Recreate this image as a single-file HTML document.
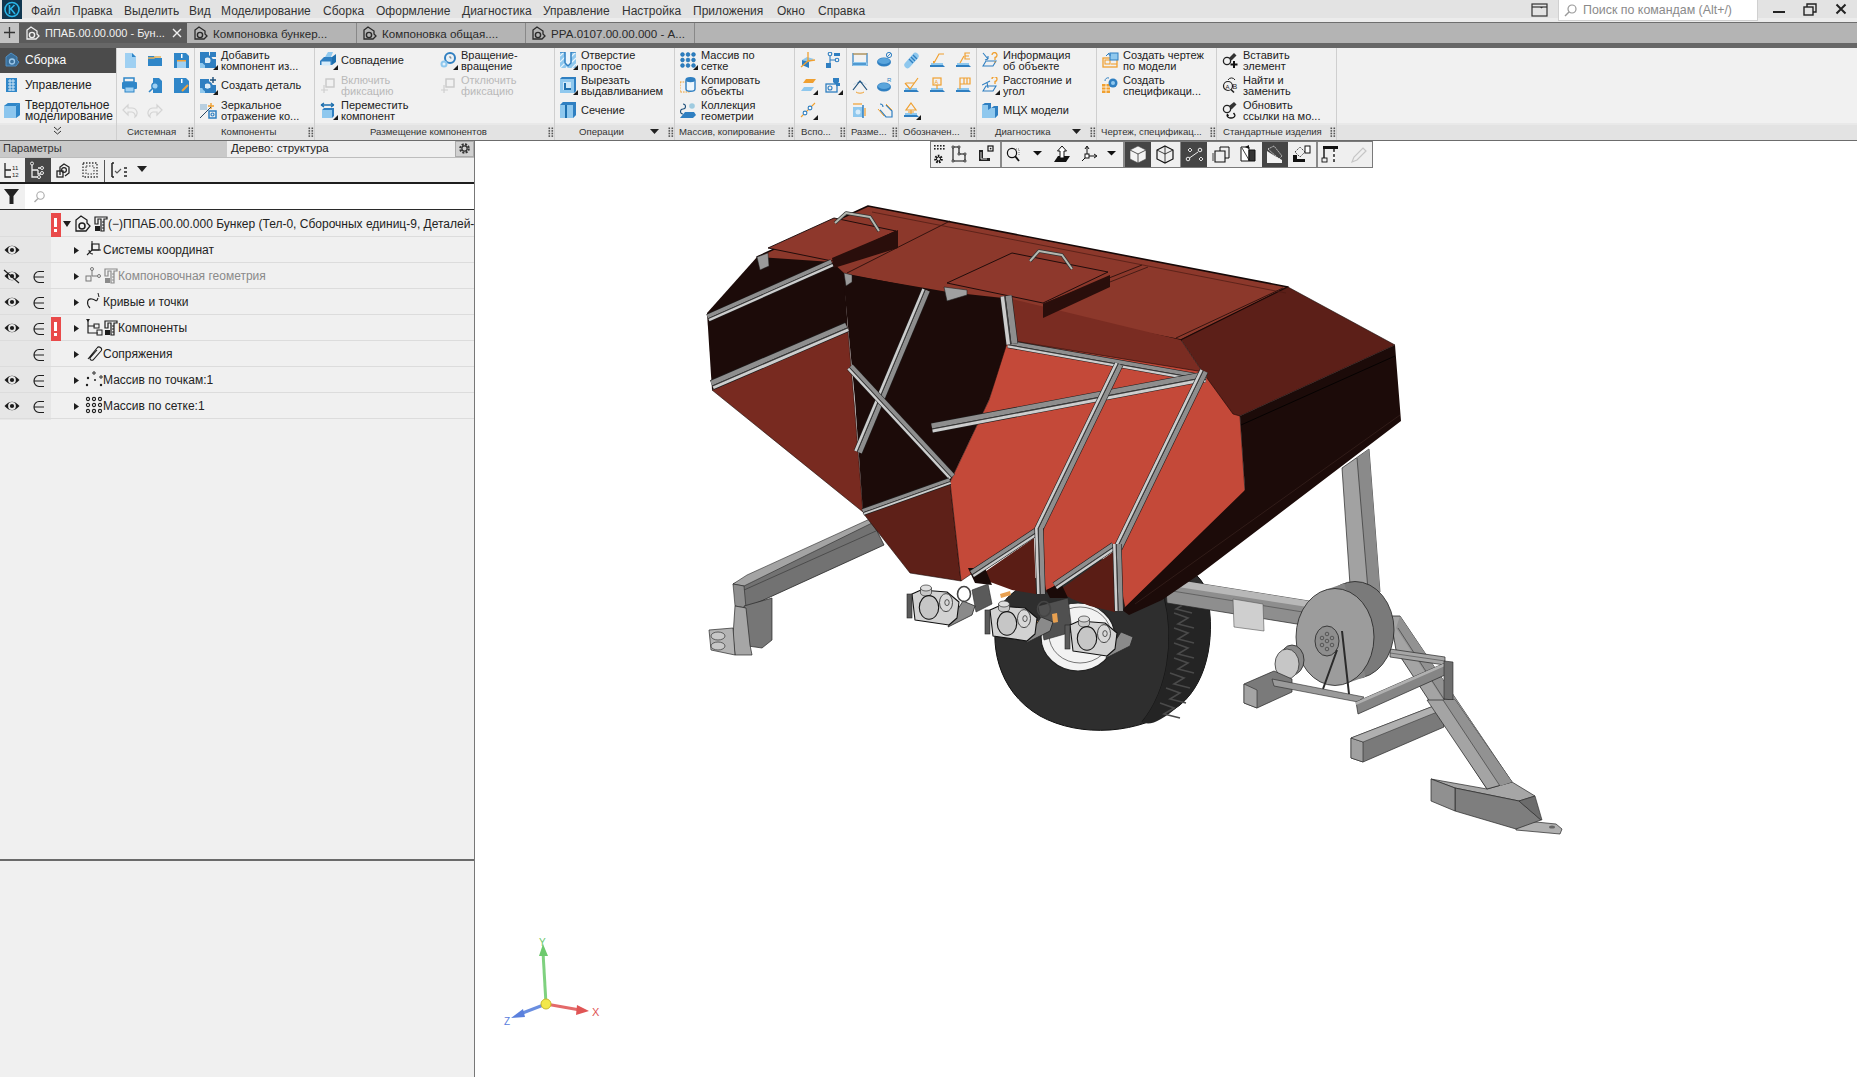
<!DOCTYPE html>
<html><head><meta charset="utf-8">
<style>
*{margin:0;padding:0;box-sizing:border-box}
html,body{width:1857px;height:1077px;overflow:hidden;background:#fff;font-family:"Liberation Sans",sans-serif;color:#222}
.a{position:absolute;white-space:nowrap}
.a svg{display:block}
svg.a{display:block}
#menu{left:0;top:0;width:1857px;height:22px;background:linear-gradient(#e3e3e3 0,#e3e3e3 18px,#ececec 18px,#ececec 22px)}
#menu span{position:absolute;top:4px;font-size:12px;color:#333}
.lbl{position:absolute;top:126px;font-size:9.6px;color:#333;white-space:nowrap}
.grip{position:absolute;top:126px;width:6px;height:11px;background-image:linear-gradient(#f0f0f0 0,#f0f0f0 0),radial-gradient(circle at 1.5px 1.5px,#555 1px,transparent 1.2px);background-size:0 0,3px 3px}
.tr{position:absolute;left:0;width:474px;height:26px;border-bottom:1px solid #dedede}
.tt{position:absolute;font-size:12px;color:#222;white-space:nowrap}
</style></head>

<body>
<svg class="a" style="left:0;top:0" width="1857" height="1077"><path d="M998 612 C990 640 995 690 1040 716 C1080 738 1140 735 1180 705 C1210 680 1216 630 1206 590 C1196 560 1150 555 1100 560 C1050 566 1005 590 998 612 Z" fill="#2e2e2e" stroke="#111" stroke-width="1"/>
<path d="M1164 596 C1175 640 1168 690 1142 722" fill="none" stroke="#161616" stroke-width="1.2"/>
<path d="M1206 590 C1216 630 1210 680 1180 705 C1160 722 1150 726 1142 722 C1168 690 1175 640 1164 596 Z" fill="#242424"/>
<path d="M1172 598 l14 5 l-10 6 l16 4" fill="none" stroke="#4a4a4a" stroke-width="1.6"/>
<path d="M1174 613 l14 5 l-10 6 l16 4" fill="none" stroke="#4a4a4a" stroke-width="1.6"/>
<path d="M1174 628 l14 5 l-10 6 l16 4" fill="none" stroke="#4a4a4a" stroke-width="1.6"/>
<path d="M1174 643 l14 5 l-10 6 l16 4" fill="none" stroke="#4a4a4a" stroke-width="1.6"/>
<path d="M1174 658 l14 5 l-10 6 l16 4" fill="none" stroke="#4a4a4a" stroke-width="1.6"/>
<path d="M1170 673 l14 5 l-10 6 l16 4" fill="none" stroke="#4a4a4a" stroke-width="1.6"/>
<path d="M1166 688 l14 5 l-10 6 l16 4" fill="none" stroke="#4a4a4a" stroke-width="1.6"/>
<path d="M1160 703 l14 5 l-10 6 l16 4" fill="none" stroke="#4a4a4a" stroke-width="1.6"/>
<ellipse cx="1078" cy="637" rx="37" ry="34" fill="#f2f2f2" stroke="#222" stroke-width="1.2"/>
<ellipse cx="1080" cy="635" rx="31" ry="28" fill="none" stroke="#555" stroke-width="0.8"/>
<polygon points="1342,468 1369,449 1380,592 1350,585" fill="#a2a2a2" stroke="#262626" stroke-width="0.7" stroke-linejoin="round"/>
<polygon points="1357,458 1369,449 1380,592 1368,590" fill="#8a8a8a" stroke="none" stroke-width="0.8" stroke-linejoin="round"/>
<line x1="1357" y1="458" x2="1368" y2="590" stroke="#333" stroke-width="0.7" stroke-linecap="butt"/>
<polygon points="1165,578 1340,606 1340,631 1167,603" fill="#8e8e8e" stroke="#262626" stroke-width="0.7" stroke-linejoin="round"/>
<polygon points="1165,578 1340,606 1340,612 1165,585" fill="#b8b8b8" stroke="none" stroke-width="0.8" stroke-linejoin="round"/>
<line x1="1166" y1="590" x2="1340" y2="618" stroke="#444" stroke-width="0.6" stroke-linecap="butt"/>
<polygon points="1233,599 1263,604 1264,631 1234,627" fill="#cfcfcf" stroke="#555" stroke-width="0.6" stroke-linejoin="round"/>
<polygon points="1390,616 1400,616 1512,782 1487,789 1396,650" fill="#a4a4a4" stroke="#262626" stroke-width="0.8" stroke-linejoin="round"/>
<polygon points="1400,616 1512,782 1500,786 1396,628" fill="#929292" stroke="none" stroke-width="0.8" stroke-linejoin="round"/>
<line x1="1398" y1="628" x2="1500" y2="786" stroke="#333" stroke-width="0.6" stroke-linecap="butt"/>
<polygon points="1390,649 1445,657 1445,665 1390,657" fill="#a6a6a6" stroke="#262626" stroke-width="0.7" stroke-linejoin="round"/>
<line x1="1390" y1="653" x2="1445" y2="661" stroke="#333" stroke-width="0.5" stroke-linecap="butt"/>
<polygon points="1516,820 1556,824 1562,829 1560,834 1516,830" fill="#b0b0b0" stroke="#262626" stroke-width="0.7" stroke-linejoin="round"/>
<ellipse cx="1552" cy="827" rx="3" ry="1.6" fill="#666"/>
<polygon points="1431,779 1487,789 1512,782 1535,796 1519,801 1455,788" fill="#a6a6a6" stroke="#262626" stroke-width="0.7" stroke-linejoin="round"/>
<polygon points="1455,788 1519,801 1541,820 1516,829 1455,811" fill="#7e7e7e" stroke="#262626" stroke-width="0.7" stroke-linejoin="round"/>
<polygon points="1431,779 1455,788 1455,811 1431,801" fill="#909090" stroke="#262626" stroke-width="0.7" stroke-linejoin="round"/>
<polygon points="1519,801 1535,796 1542,820 1541,820" fill="#6c6c6c" stroke="#262626" stroke-width="0.6" stroke-linejoin="round"/>
<polygon points="733,584 872,521 884,545 746,608" fill="#727272" stroke="#262626" stroke-width="0.8" stroke-linejoin="round"/>
<polygon points="733,584 747,575 872,518 872,523 744,586" fill="#a4a4a4" stroke="#262626" stroke-width="0.6" stroke-linejoin="round"/>
<line x1="744" y1="590" x2="876" y2="531" stroke="#333" stroke-width="0.6" stroke-linecap="butt"/>
<polygon points="733,584 744,586 746,608 735,606" fill="#8e8e8e" stroke="#262626" stroke-width="0.6" stroke-linejoin="round"/>
<polygon points="744,606 772,598 772,640 762,648 748,646" fill="#767676" stroke="#262626" stroke-width="0.7" stroke-linejoin="round"/>
<polygon points="735,606 746,608 750,645 752,655 735,655 733,636" fill="#a6a6a6" stroke="#262626" stroke-width="0.7" stroke-linejoin="round"/>
<polygon points="709,630 733,628 735,655 711,650" fill="#b4b4b4" stroke="#262626" stroke-width="0.7" stroke-linejoin="round"/>
<ellipse cx="718" cy="636" rx="7" ry="4" fill="#c8c8c8" stroke="#333" stroke-width="0.7"/>
<ellipse cx="718" cy="646" rx="7" ry="4" fill="#c8c8c8" stroke="#333" stroke-width="0.7"/>
<polygon points="757,257 868,206 1288,287 1181,340" fill="#8c382b" stroke="#160807" stroke-width="1.6" stroke-linejoin="round"/>
<polygon points="707,313 757,257 832,262 844,273 848,331 712,390" fill="#1c0b09" stroke="none" stroke-width="0.8" stroke-linejoin="round"/>
<polygon points="712,390 848,331 854,400 863,512" fill="#782a20" stroke="#1a0a08" stroke-width="0.6" stroke-linejoin="round"/>
<polygon points="843,274 948,292 1003,298 1009,343 989,400 950,482 863,513 855,400" fill="#1c0b09" stroke="none" stroke-width="0.8" stroke-linejoin="round"/>
<polygon points="863,513 950,482 961,581 910,573" fill="#5e2018" stroke="#1a0a08" stroke-width="0.6" stroke-linejoin="round"/>
<polygon points="1008,298 1181,340 1204,374 1008,342" fill="#7a2c22" stroke="none" stroke-width="0.8" stroke-linejoin="round"/>
<polygon points="1008,340 1204,372 1240,416 1245,492 1125,608 1112,546 1046,592 1034,531 961,581 950,482 989,400" fill="#c44939" stroke="#1a0a08" stroke-width="0.6" stroke-linejoin="round"/>
<polygon points="1288,287 1395,345 1240,416 1233,414 1204,374 1181,340" fill="#5c1f18" stroke="#160807" stroke-width="0.6" stroke-linejoin="round"/>
<polygon points="1240,416 1395,345 1401,421 1200,574 1162,600 1129,615 1122,610 1245,490" fill="#1c0b09" stroke="none" stroke-width="0.8" stroke-linejoin="round"/>
<line x1="1241" y1="425" x2="1395" y2="356" stroke="#000" stroke-width="0.8" stroke-linecap="butt"/>
<line x1="1135" y1="604" x2="1400" y2="415" stroke="#3a2420" stroke-width="0.7" stroke-linecap="butt"/>
<polygon points="976,578 1034,538 1036,594 1012,590 993,583" fill="#5a1d15" stroke="none" stroke-width="0.8" stroke-linejoin="round"/>
<polygon points="1058,591 1113,552 1115,612 1090,606 1072,599" fill="#5a1d15" stroke="none" stroke-width="0.8" stroke-linejoin="round"/>
<polygon points="968,568 985,568 992,585 975,583" fill="#1a0a08" stroke="none" stroke-width="0.8" stroke-linejoin="round"/>
<polygon points="1046,590 1061,583 1068,598 1050,598" fill="#1a0a08" stroke="none" stroke-width="0.8" stroke-linejoin="round"/>
<polygon points="768,248 834,218 896,231 832,261" fill="#8e382c" stroke="#150808" stroke-width="0.9" stroke-linejoin="round"/>
<polygon points="832,258 898,230 898,248 834,268" fill="#2a0e0b" stroke="none" stroke-width="0.8" stroke-linejoin="round"/>
<path d="M835 223 L846 213 L870 217 L879 231" fill="none" stroke="#333" stroke-width="3.4" stroke-linejoin="round"/><path d="M835 223 L846 213 L870 217 L879 231" fill="none" stroke="#b4b8b0" stroke-width="2" stroke-linejoin="round"/>
<polygon points="757,257 768,253 769,266 760,270" fill="#9a9a9a" stroke="#222" stroke-width="0.5" stroke-linejoin="round"/>
<polygon points="844,273 852,275 852,282 846,286" fill="#9a9a9a" stroke="#222" stroke-width="0.5" stroke-linejoin="round"/>
<polygon points="947,283 1012,253 1108,272 1043,303" fill="#8e382c" stroke="#150808" stroke-width="0.9" stroke-linejoin="round"/>
<polygon points="1043,304 1110,275 1110,287 1043,318" fill="#2a0e0b" stroke="none" stroke-width="0.8" stroke-linejoin="round"/>
<path d="M1030 261 L1039 251 L1062 255 L1072 269" fill="none" stroke="#333" stroke-width="3.4" stroke-linejoin="round"/><path d="M1030 261 L1039 251 L1062 255 L1072 269" fill="none" stroke="#b4b8b0" stroke-width="2" stroke-linejoin="round"/>
<polygon points="944,287 967,290 967,295 947,301" fill="#a0a0a0" stroke="#222" stroke-width="0.6" stroke-linejoin="round"/>
<line x1="950" y1="221" x2="847" y2="273" stroke="#2a100c" stroke-width="0.9" stroke-linecap="butt"/>
<line x1="1142" y1="265" x2="1043" y2="304" stroke="#2a100c" stroke-width="0.9" stroke-linecap="butt"/>
<line x1="1148" y1="267" x2="1049" y2="306" stroke="#2a100c" stroke-width="0.7" stroke-linecap="butt"/>
<line x1="1283" y1="288" x2="1176" y2="338" stroke="#2a100c" stroke-width="0.9" stroke-linecap="butt"/>
<line x1="872" y1="212" x2="1286" y2="293" stroke="#4a1a12" stroke-width="0.7" stroke-linecap="butt"/>
<polygon points="706.3,314.3 830.3,259.3 833.7,266.7 709.7,321.7" fill="#1e1e1e"/>
<polygon points="706.6,314.8 830.6,259.8 832.1,263.3 708.1,318.3" fill="#8e8e8e"/>
<polygon points="708.1,318.3 832.1,263.3 832.5,264.1 708.5,319.1" fill="#3a3a3a"/>
<polygon points="708.5,319.1 832.5,264.1 833.4,266.2 709.4,321.2" fill="#cdcdcd"/>
<polygon points="710.0,380.3 845.0,322.3 849.0,331.7 714.0,389.7" fill="#1e1e1e"/>
<polygon points="710.2,380.9 845.2,322.9 847.2,327.4 712.2,385.4" fill="#8e8e8e"/>
<polygon points="712.2,385.4 847.2,327.4 847.6,328.4 712.6,386.4" fill="#3a3a3a"/>
<polygon points="712.6,386.4 847.6,328.4 848.8,331.1 713.8,389.1" fill="#cdcdcd"/>
<polygon points="1008.7,340.0 1206.7,375.0 1205.3,383.0 1007.3,348.0" fill="#1e1e1e"/>
<polygon points="1008.6,340.6 1206.6,375.6 1205.9,379.3 1007.9,344.3" fill="#8e8e8e"/>
<polygon points="1007.9,344.3 1205.9,379.3 1205.8,380.2 1007.8,345.2" fill="#3a3a3a"/>
<polygon points="1007.8,345.2 1205.8,380.2 1205.4,382.4 1007.4,347.4" fill="#cdcdcd"/>
<polygon points="1012.1,295.2 1018.1,343.2 1005.9,344.8 999.9,296.8" fill="#1e1e1e"/>
<polygon points="1011.5,295.3 1017.5,343.3 1011.5,344.1 1005.5,296.1" fill="#8e8e8e"/>
<polygon points="1005.5,296.1 1011.5,344.1 1010.1,344.2 1004.1,296.2" fill="#3a3a3a"/>
<polygon points="1004.1,296.2 1010.1,344.2 1006.5,344.7 1000.5,296.7" fill="#cdcdcd"/>
<polygon points="930.2,291.8 862.2,453.8 853.8,450.2 921.8,288.2" fill="#1e1e1e"/>
<polygon points="929.7,291.5 861.7,453.5 857.6,451.8 925.6,289.8" fill="#8e8e8e"/>
<polygon points="925.6,289.8 857.6,451.8 856.7,451.5 924.7,289.5" fill="#3a3a3a"/>
<polygon points="924.7,289.5 856.7,451.5 854.3,450.5 922.3,288.5" fill="#cdcdcd"/>
<polygon points="853.0,364.2 955.0,474.2 949.0,479.8 847.0,369.8" fill="#1e1e1e"/>
<polygon points="852.6,364.6 954.6,474.6 951.7,477.2 849.7,367.2" fill="#8e8e8e"/>
<polygon points="849.7,367.2 951.7,477.2 951.1,477.8 849.1,367.8" fill="#3a3a3a"/>
<polygon points="849.1,367.8 951.1,477.8 949.4,479.4 847.4,369.4" fill="#cdcdcd"/>
<polygon points="861.8,508.6 948.8,477.6 951.2,484.4 864.2,515.4" fill="#1e1e1e"/>
<polygon points="862.0,509.2 949.0,478.2 950.1,481.3 863.1,512.3" fill="#8e8e8e"/>
<polygon points="863.1,512.3 950.1,481.3 950.4,482.0 863.4,513.0" fill="#3a3a3a"/>
<polygon points="863.4,513.0 950.4,482.0 951.0,483.8 864.0,514.8" fill="#cdcdcd"/>
<polygon points="931.1,423.0 1201.1,372.0 1202.9,382.0 932.9,433.0" fill="#1e1e1e"/>
<polygon points="931.2,423.6 1201.2,372.6 1202.1,377.4 932.1,428.4" fill="#8e8e8e"/>
<polygon points="932.1,428.4 1202.1,377.4 1202.3,378.5 932.3,429.5" fill="#3a3a3a"/>
<polygon points="932.3,429.5 1202.3,378.5 1202.8,381.4 932.8,432.4" fill="#cdcdcd"/>
<polygon points="1123.1,366.0 1040.1,537.0 1031.9,533.0 1114.9,362.0" fill="#1e1e1e"/>
<polygon points="1122.6,365.7 1039.6,536.7 1035.6,534.8 1118.6,363.8" fill="#8e8e8e"/>
<polygon points="1118.6,363.8 1035.6,534.8 1034.7,534.4 1117.7,363.4" fill="#3a3a3a"/>
<polygon points="1117.7,363.4 1034.7,534.4 1032.4,533.3 1115.4,362.3" fill="#cdcdcd"/>
<polygon points="1208.1,373.0 1122.1,550.0 1113.9,546.0 1199.9,369.0" fill="#1e1e1e"/>
<polygon points="1207.6,372.7 1121.6,549.7 1117.6,547.8 1203.6,370.8" fill="#8e8e8e"/>
<polygon points="1203.6,370.8 1117.6,547.8 1116.7,547.4 1202.7,370.4" fill="#3a3a3a"/>
<polygon points="1202.7,370.4 1116.7,547.4 1114.4,546.3 1200.4,369.3" fill="#cdcdcd"/>
<polygon points="969.8,570.6 1033.8,528.6 1038.2,535.4 974.2,577.4" fill="#1e1e1e"/>
<polygon points="970.1,571.1 1034.1,529.1 1036.2,532.3 972.2,574.3" fill="#8e8e8e"/>
<polygon points="972.2,574.3 1036.2,532.3 1036.7,533.0 972.7,575.0" fill="#3a3a3a"/>
<polygon points="972.7,575.0 1036.7,533.0 1037.9,534.9 973.9,576.9" fill="#cdcdcd"/>
<polygon points="1052.7,582.6 1111.7,542.6 1116.3,549.4 1057.3,589.4" fill="#1e1e1e"/>
<polygon points="1053.0,583.1 1112.0,543.1 1114.2,546.3 1055.2,586.3" fill="#8e8e8e"/>
<polygon points="1055.2,586.3 1114.2,546.3 1114.7,547.0 1055.7,587.0" fill="#3a3a3a"/>
<polygon points="1055.7,587.0 1114.7,547.0 1116.0,548.9 1057.0,588.9" fill="#cdcdcd"/>
<polygon points="1043.6,527.9 1045.6,593.9 1036.4,594.1 1034.4,528.1" fill="#1e1e1e"/>
<polygon points="1043.0,527.9 1045.0,593.9 1040.6,594.0 1038.6,528.0" fill="#8e8e8e"/>
<polygon points="1038.6,528.0 1040.6,594.0 1039.6,594.0 1037.6,528.0" fill="#3a3a3a"/>
<polygon points="1037.6,528.0 1039.6,594.0 1037.0,594.1 1035.0,528.1" fill="#cdcdcd"/>
<polygon points="1121.6,543.9 1123.6,610.9 1114.4,611.1 1112.4,544.1" fill="#1e1e1e"/>
<polygon points="1121.0,543.9 1123.0,610.9 1118.6,611.0 1116.6,544.0" fill="#8e8e8e"/>
<polygon points="1116.6,544.0 1118.6,611.0 1117.6,611.0 1115.6,544.0" fill="#3a3a3a"/>
<polygon points="1115.6,544.0 1117.6,611.0 1115.0,611.1 1113.0,544.1" fill="#cdcdcd"/>
<polygon points="972,590 988,584 992,604 976,612" fill="#5a5a5a" stroke="#262626" stroke-width="0.6" stroke-linejoin="round"/>
<polygon points="1038,606 1068,598 1072,632 1044,640" fill="#505050" stroke="#262626" stroke-width="0.6" stroke-linejoin="round"/>
<polygon points="1052,614 1057,613 1058,622 1053,623" fill="#e8a050" stroke="none" stroke-width="0.8" stroke-linejoin="round"/>
<polygon points="1033,622 1038,621 1039,630 1034,631" fill="#e8a050" stroke="none" stroke-width="0.8" stroke-linejoin="round"/>
<polygon points="1000,594 1010,591 1011,595 1001,598" fill="#e8a050" stroke="none" stroke-width="0.8" stroke-linejoin="round"/>
<polygon points="951,620 963,601 975,606 972,615 948,627" fill="#8a8a8a" stroke="#262626" stroke-width="0.8" stroke-linejoin="round"/>
<polygon points="912,594 921,590 947,592 959,602 957,618 949,625 915,620" fill="#d2d2d2" stroke="#111" stroke-width="1.1" stroke-linejoin="round"/>
<rect x="907" y="594" width="5" height="24" fill="#5a5a5a" stroke="#222" stroke-width="0.6"/>
<path d="M920.5 588v5a5.5 3 0 0 0 11 0v-5z" fill="#c8c8c8" stroke="#333" stroke-width="0.7"/><ellipse cx="926" cy="588" rx="5.5" ry="3" fill="#dedede" stroke="#333" stroke-width="0.7"/>
<ellipse cx="929" cy="607.4" rx="9.7" ry="11.8" fill="#c6c6c6" stroke="#111" stroke-width="1.1"/>
<ellipse cx="946" cy="602.6" rx="6.5" ry="9" fill="#d8d8d8" stroke="#222" stroke-width="0.8"/><ellipse cx="947" cy="602.6" rx="2.2" ry="3" fill="none" stroke="#333" stroke-width="0.8"/>
<polygon points="1029,636 1041,617 1053,622 1050,631 1026,643" fill="#8a8a8a" stroke="#262626" stroke-width="0.8" stroke-linejoin="round"/>
<polygon points="990,610 999,606 1025,608 1037,618 1035,634 1027,641 993,636" fill="#d2d2d2" stroke="#111" stroke-width="1.1" stroke-linejoin="round"/>
<rect x="985" y="610" width="5" height="24" fill="#5a5a5a" stroke="#222" stroke-width="0.6"/>
<path d="M998.5 604v5a5.5 3 0 0 0 11 0v-5z" fill="#c8c8c8" stroke="#333" stroke-width="0.7"/><ellipse cx="1004" cy="604" rx="5.5" ry="3" fill="#dedede" stroke="#333" stroke-width="0.7"/>
<ellipse cx="1007" cy="623.4" rx="9.7" ry="11.8" fill="#c6c6c6" stroke="#111" stroke-width="1.1"/>
<ellipse cx="1024" cy="618.6" rx="6.5" ry="9" fill="#d8d8d8" stroke="#222" stroke-width="0.8"/><ellipse cx="1025" cy="618.6" rx="2.2" ry="3" fill="none" stroke="#333" stroke-width="0.8"/>
<polygon points="1109,651 1121,632 1133,637 1130,646 1106,658" fill="#8a8a8a" stroke="#262626" stroke-width="0.8" stroke-linejoin="round"/>
<polygon points="1070,625 1079,621 1105,623 1117,633 1115,649 1107,656 1073,651" fill="#d2d2d2" stroke="#111" stroke-width="1.1" stroke-linejoin="round"/>
<rect x="1065" y="625" width="5" height="24" fill="#5a5a5a" stroke="#222" stroke-width="0.6"/>
<path d="M1078.5 619v5a5.5 3 0 0 0 11 0v-5z" fill="#c8c8c8" stroke="#333" stroke-width="0.7"/><ellipse cx="1084" cy="619" rx="5.5" ry="3" fill="#dedede" stroke="#333" stroke-width="0.7"/>
<ellipse cx="1087" cy="638.4" rx="9.7" ry="11.8" fill="#c6c6c6" stroke="#111" stroke-width="1.1"/>
<ellipse cx="1104" cy="633.6" rx="6.5" ry="9" fill="#d8d8d8" stroke="#222" stroke-width="0.8"/><ellipse cx="1105" cy="633.6" rx="2.2" ry="3" fill="none" stroke="#333" stroke-width="0.8"/>
<ellipse cx="964" cy="594" rx="6.5" ry="7.5" fill="none" stroke="#444" stroke-width="1.6"/>
<ellipse cx="1044" cy="609" rx="6.5" ry="7.5" fill="none" stroke="#444" stroke-width="1.6"/>
<ellipse cx="1355" cy="630" rx="39" ry="48.5" fill="#7a7a7a" stroke="#222" stroke-width="0.8"/>
<polygon points="1345.5,683.7 1324.5,590.3 1344.5,583.3 1365.5,676.7" fill="#858585" stroke="none" stroke-width="0.8" stroke-linejoin="round"/>
<ellipse cx="1335" cy="637" rx="39" ry="48.5" fill="#9c9c9c" stroke="#222" stroke-width="0.8"/>
<ellipse cx="1327" cy="641" rx="12" ry="15" fill="#8e8e8e" stroke="#222" stroke-width="0.8"/>
<circle cx="1327" cy="634" r="1.8" fill="none" stroke="#333" stroke-width="0.6"/>
<circle cx="1332" cy="638" r="1.8" fill="none" stroke="#333" stroke-width="0.6"/>
<circle cx="1332" cy="645" r="1.8" fill="none" stroke="#333" stroke-width="0.6"/>
<circle cx="1327" cy="649" r="1.8" fill="none" stroke="#333" stroke-width="0.6"/>
<circle cx="1322" cy="645" r="1.8" fill="none" stroke="#333" stroke-width="0.6"/>
<circle cx="1322" cy="638" r="1.8" fill="none" stroke="#333" stroke-width="0.6"/>
<circle cx="1327" cy="641" r="1.8" fill="none" stroke="#333" stroke-width="0.6"/>
<path d="M1342 631 L1349 694 M1337 650 L1323 689" stroke="#2a2a2a" stroke-width="2"/>
<ellipse cx="1292" cy="660" rx="12" ry="15" fill="#8a8a8a" stroke="#222" stroke-width="0.8"/>
<ellipse cx="1287" cy="664" rx="12" ry="15" fill="#c6c6c6" stroke="#333" stroke-width="0.8"/>
<polygon points="1244,684 1274,671 1292,679 1292,692 1257,708 1244,703" fill="#7a7a7a" stroke="#262626" stroke-width="0.7" stroke-linejoin="round"/>
<polygon points="1244,684 1257,690 1257,708 1244,703" fill="#a4a4a4" stroke="#262626" stroke-width="0.6" stroke-linejoin="round"/>
<polygon points="1272,679 1364,697 1358,702 1274,686" fill="#9a9a9a" stroke="#262626" stroke-width="0.6" stroke-linejoin="round"/>
<polygon points="1356,702 1445,663 1445,675 1358,714" fill="#858585" stroke="#262626" stroke-width="0.7" stroke-linejoin="round"/>
<polygon points="1356,702 1445,663 1445,666 1356,705" fill="#b0b0b0" stroke="none" stroke-width="0.8" stroke-linejoin="round"/>
<polygon points="1444,661 1453,662 1453,700 1444,699" fill="#6e6e6e" stroke="#262626" stroke-width="0.6" stroke-linejoin="round"/>
<polygon points="1351,738 1444,702 1444,727 1363,762 1351,758" fill="#7a7a7a" stroke="#262626" stroke-width="0.7" stroke-linejoin="round"/>
<polygon points="1351,738 1363,742 1363,762 1351,758" fill="#a0a0a0" stroke="#262626" stroke-width="0.6" stroke-linejoin="round"/>
<polygon points="1351,738 1444,702 1452,706 1363,742" fill="#b0b0b0" stroke="#262626" stroke-width="0.5" stroke-linejoin="round"/>
<polygon points="1427,700 1455,700 1512,782 1487,789" fill="#a4a4a4" stroke="#262626" stroke-width="0.7" stroke-linejoin="round"/>
<polygon points="1443,700 1455,700 1512,782 1500,786" fill="#929292" stroke="none" stroke-width="0.8" stroke-linejoin="round"/>
<line x1="1443" y1="700" x2="1500" y2="786" stroke="#333" stroke-width="0.6" stroke-linecap="butt"/></svg>
<svg class="a" style="left:495px;top:930px" width="115" height="100">
<line x1="51" y1="74" x2="48" y2="22" stroke="#7fd17f" stroke-width="3"/><path d="M44 26l4-12 5 12z" fill="#6cc96c"/>
<text x="44" y="16" font-size="10" fill="#6cc96c" font-family="Liberation Sans">Y</text>
<line x1="51" y1="74" x2="85" y2="80" stroke="#e46a6a" stroke-width="3"/><path d="M82 75l12 6-13 4z" fill="#e05555"/>
<text x="97" y="86" font-size="11" fill="#e05555" font-family="Liberation Sans">X</text>
<line x1="51" y1="74" x2="25" y2="84" stroke="#6a8ee0" stroke-width="3"/><path d="M28 79l-12 9 14 -1z" fill="#5a80dd"/>
<text x="9" y="95" font-size="10" fill="#5a80dd" font-family="Liberation Sans">Z</text>
<circle cx="51" cy="74" r="5" fill="#f2e84a" stroke="#c9b92a" stroke-width="1"/>
</svg>
<div class="a" style="left:930px;top:141px;width:443px;height:27px;background:#efefef;border:1px solid #7a7a7a"></div>
<div class="a" style="left:1000px;top:142px;width:1.5px;height:25px;background:#8a8a8a"></div>
<div class="a" style="left:1123px;top:142px;width:1.5px;height:25px;background:#8a8a8a"></div>
<div class="a" style="left:1180px;top:142px;width:1.5px;height:25px;background:#8a8a8a"></div>
<div class="a" style="left:1316px;top:142px;width:1.5px;height:25px;background:#8a8a8a"></div>
<div class="a" style="left:1125px;top:142px;width:26px;height:25px;background:#454545"></div>
<div class="a" style="left:1181px;top:142px;width:26px;height:25px;background:#454545"></div>
<div class="a" style="left:1262px;top:142px;width:26px;height:25px;background:#454545"></div>
<svg class="a" style="left:0;top:0" width="1857" height="200"><rect x="934" y="145" width="1.6" height="1.6" fill="#222"/><rect x="934" y="148" width="1.6" height="1.6" fill="#222"/><rect x="937" y="145" width="1.6" height="1.6" fill="#222"/><rect x="937" y="148" width="1.6" height="1.6" fill="#222"/><rect x="940" y="145" width="1.6" height="1.6" fill="#222"/><rect x="940" y="148" width="1.6" height="1.6" fill="#222"/><rect x="943" y="145" width="1.6" height="1.6" fill="#222"/><rect x="943" y="148" width="1.6" height="1.6" fill="#222"/><circle cx="938.5" cy="159" r="3.2" fill="none" stroke="#111" stroke-width="2.2" stroke-dasharray="1.6 1.2"/><circle cx="938.5" cy="159" r="2" fill="none" stroke="#111" stroke-width="1"/><path d="M953 147h6v7h6v7h-12z" fill="none" stroke="#111" stroke-width="1.1"/><circle cx="953" cy="147" r="1.1" fill="#fff" stroke="#111" stroke-width="0.8"/><circle cx="959" cy="147" r="1.1" fill="#fff" stroke="#111" stroke-width="0.8"/><circle cx="959" cy="154" r="1.1" fill="#fff" stroke="#111" stroke-width="0.8"/><circle cx="965" cy="154" r="1.1" fill="#fff" stroke="#111" stroke-width="0.8"/><circle cx="965" cy="161" r="1.1" fill="#fff" stroke="#111" stroke-width="0.8"/><circle cx="953" cy="161" r="1.1" fill="#fff" stroke="#111" stroke-width="0.8"/><path d="M979 150h4v8h7v3h-11z" fill="#222"/><path d="M981 152v7h6" fill="none" stroke="#fff" stroke-width="0.8"/><rect x="988" y="146" width="5" height="5" fill="#fff" stroke="#111" stroke-width="1.2"/><rect x="989.8" y="147.8" width="1.6" height="1.6" fill="#111"/><circle cx="1012" cy="153" r="4.6" fill="none" stroke="#111" stroke-width="1.2"/><path d="M1015 156l4 5" stroke="#111" stroke-width="1.8"/><path d="M1014 149h5v7" fill="none" stroke="#555" stroke-width="0.8" stroke-dasharray="1 1"/><path d="M1033 151h9l-4.5 4.5z" fill="#111"/><path d="M1054 162l4-6h12l-4 6z" fill="#111"/><path d="M1060 158v-7h-2.5l4.5-5 4.5 5h-2.5v7z" fill="#fff" stroke="#111" stroke-width="1"/><path d="M1087 156v-9M1085 149l2-3 2 3M1087 156h9M1094 154l3 2-3 2M1087 156l-5 5" fill="none" stroke="#111" stroke-width="1"/><rect x="1085" y="154" width="4" height="4" fill="#fff" stroke="#111" stroke-width="1"/><path d="M1107 151h9l-4.5 4.5z" fill="#111"/><path d="M1138 146l8 4v9l-8 4-8-4v-9z" fill="#f4f4f4" stroke="#444" stroke-width="0.6"/><path d="M1130 150l8 4 8-4M1138 154v9" fill="none" stroke="#444" stroke-width="0.9"/><path d="M1165 146l8 4v9l-8 4-8-4v-9z" fill="none" stroke="#111" stroke-width="1.2"/><path d="M1157 150l8 4 8-4M1165 154v9M1165 146v8" fill="none" stroke="#111" stroke-width="0.8"/><path d="M1188 159l10-7" stroke="#eee" stroke-width="1"/><circle cx="1188" cy="159" r="1.8" fill="#454545" stroke="#eee" stroke-width="1"/><circle cx="1200" cy="150" r="1.8" fill="#454545" stroke="#eee" stroke-width="1"/><path d="M1188 150l2-2 2 2-2 2z M1199 159l2-2 2 2-2 2z" fill="none" stroke="#eee" stroke-width="0.9"/><path d="M1215 151h10v11h-10z" fill="none" stroke="#111" stroke-width="1.1"/><path d="M1220 151v-4h9v11h-4" fill="none" stroke="#111" stroke-width="1"/><path d="M1213 153v8" stroke="#111" stroke-width="0.8"/><path d="M1241 147h8v14h-8z" fill="#fff" stroke="#111" stroke-width="1"/><path d="M1249 150h6v11h-6z" fill="#333" stroke="#111" stroke-width="1"/><path d="M1242 148l7 12" stroke="#111" stroke-width="0.8"/><path d="M1245 147l4-2v4z" fill="#111"/><path d="M1267 151l8 5 7 4v3h-15z" fill="#f2f2f2"/><path d="M1268 149l6-3 8 10-3 3z" fill="none" stroke="#ddd" stroke-width="1" stroke-dasharray="1.5 1"/><path d="M1293 155h4v4h8v3h-12z" fill="#111"/><path d="M1295 152l5-5 5 5-5 5z" fill="none" stroke="#333" stroke-width="0.9" stroke-dasharray="1.5 1"/><rect x="1305" y="146" width="5" height="7" fill="#fff" stroke="#111" stroke-width="1"/><path d="M1323 146h15v3h-15z" fill="#111"/><path d="M1324 149v9M1334 149v13" stroke="#111" stroke-width="1.4"/><rect x="1322" y="158" width="5" height="4" fill="none" stroke="#111" stroke-width="0.9"/><circle cx="1334" cy="153" r="1.2" fill="#fff"/><circle cx="1334" cy="158" r="1.2" fill="#fff"/><path d="M1352 162l2-5 9-9 3 3-9 9z" fill="none" stroke="#c6c6c6" stroke-width="1.2"/></svg>
<div class="a" id="menu">
 <svg class="a" style="left:2px;top:0" width="20" height="19"><rect width="20" height="19" fill="#10364f"/><circle cx="10" cy="9.5" r="7" fill="none" stroke="#2ab5e8" stroke-width="1.6"/><path d="M7.5 5v9M7.5 10l5-5M9 9l4 5" stroke="#2ab5e8" stroke-width="1.6" fill="none"/></svg>
 <span style="left:31px">Файл</span><span style="left:72px">Правка</span><span style="left:124px">Выделить</span><span style="left:189px">Вид</span><span style="left:221px">Моделирование</span><span style="left:323px">Сборка</span><span style="left:376px">Оформление</span><span style="left:462px">Диагностика</span><span style="left:543px">Управление</span><span style="left:622px">Настройка</span><span style="left:693px">Приложения</span><span style="left:777px">Окно</span><span style="left:818px">Справка</span>
</div>
<div class="a" style="left:0;top:141px;width:474px;height:936px;background:#f0f0f0"></div>
<div class="a" style="left:474px;top:141px;width:1px;height:936px;background:#777"></div>
<div class="a" style="left:0;top:141px;width:227px;height:16px;background:#c9c9c9"></div>
<div class="a" style="left:3px;top:142px;font-size:11px;color:#333">Параметры</div>
<div class="a" style="left:227px;top:141px;width:247px;height:16px;background:#efefef"></div>
<div class="a" style="left:231px;top:142px;font-size:11.5px;color:#222">Дерево: структура</div>
<div class="a" style="left:455px;top:141px;width:19px;height:16px;background:#d0d0d0;border:1px solid #aaa"></div>
<svg class="a" style="left:457px;top:141px" width="15" height="15"><circle cx="7.5" cy="7.5" r="4.2" fill="none" stroke="#333" stroke-width="2.2" stroke-dasharray="2 1.3"/><circle cx="7.5" cy="7.5" r="2.6" fill="none" stroke="#333" stroke-width="1.2"/></svg>
<div class="a" style="left:0;top:157px;width:474px;height:1px;background:#bdbdbd"></div>
<div class="a" style="left:25px;top:158px;width:26px;height:25px;background:#474747"></div>
<div class="a" style="left:104px;top:160px;width:1px;height:22px;background:#555"></div>
<div class="a" style="left:0;top:182px;width:474px;height:2px;background:#1e1e1e"></div>
<svg class="a" style="left:3px;top:161px" width="18" height="18"><path d="M2 2v14h6M2 9h6" fill="none" stroke="#222" stroke-width="1.3"/><text x="9" y="9" font-size="6" font-family="Liberation Sans" fill="#222">11</text><text x="9" y="16" font-size="6" font-family="Liberation Sans" fill="#222">12</text></svg>
<svg class="a" style="left:29px;top:161px" width="18" height="18"><path d="M3 2v14h7M3 9h6M9 9v4h5M9 7h5" fill="none" stroke="#eee" stroke-width="1.3"/><circle cx="3" cy="2.5" r="1.5" fill="#474747" stroke="#eee"/><circle cx="13" cy="7" r="1.5" fill="#474747" stroke="#eee"/><circle cx="13" cy="12" r="1.5" fill="#474747" stroke="#eee"/><circle cx="10" cy="16" r="1.5" fill="#474747" stroke="#eee"/></svg>
<svg class="a" style="left:55px;top:161px" width="18" height="18"><path d="M5 14V6l4-3 5 3v6l-4 3" fill="none" stroke="#222" stroke-width="1.3"/><rect x="2" y="10" width="6" height="6" fill="none" stroke="#222" stroke-width="1.3"/><circle cx="9" cy="9" r="2.4" fill="none" stroke="#222" stroke-width="1.2"/></svg>
<svg class="a" style="left:81px;top:161px" width="18" height="18"><rect x="2" y="2" width="14" height="14" fill="none" stroke="#333" stroke-width="1.3" stroke-dasharray="1.5 1.5"/><rect x="5" y="5" width="8" height="8" fill="none" stroke="#333" stroke-width="1" stroke-dasharray="1.5 1.5"/></svg>
<svg class="a" style="left:110px;top:161px" width="18" height="18"><path d="M2 2v14M2 2h2M2 16h2M14 7h3M14 11h3M14 15h3" stroke="#222" stroke-width="1.5"/><path d="M5 10l2 2 4-4" fill="none" stroke="#555" stroke-width="1.1"/></svg>
<svg class="a" style="left:137px;top:166px" width="10" height="7"><path d="M0 0h10L5 6z" fill="#222"/></svg>
<div class="a" style="left:25px;top:184px;width:449px;height:25px;background:#fff"></div>
<svg class="a" style="left:3px;top:188px" width="17" height="17"><path d="M1 1h15l-5.5 7v8h-4V8z" fill="#222"/></svg>
<svg class="a" style="left:33px;top:190px" width="13" height="13"><circle cx="7.5" cy="5.5" r="3.7" fill="none" stroke="#aaa" stroke-width="1.1"/><path d="M5 8.5l-3.5 3.5" stroke="#aaa" stroke-width="1.5"/></svg>
<div class="a" style="left:0;top:209px;width:474px;height:1px;background:#2a2a2a"></div>
<div class="a" style="left:0;top:210px;width:51px;height:210px;background:#e6e6e6"></div>
<div class="a" style="left:0;top:236px;width:474px;height:1px;background:#dcdcdc"></div>
<div class="a" style="left:0;top:262px;width:474px;height:1px;background:#dcdcdc"></div>
<div class="a" style="left:0;top:288px;width:474px;height:1px;background:#dcdcdc"></div>
<div class="a" style="left:0;top:314px;width:474px;height:1px;background:#dcdcdc"></div>
<div class="a" style="left:0;top:340px;width:474px;height:1px;background:#dcdcdc"></div>
<div class="a" style="left:0;top:366px;width:474px;height:1px;background:#dcdcdc"></div>
<div class="a" style="left:0;top:392px;width:474px;height:1px;background:#dcdcdc"></div>
<div class="a" style="left:0;top:418px;width:474px;height:1px;background:#dcdcdc"></div>
<div class="a" style="left:51px;top:213px;width:10px;height:24px;background:#e94a4a"></div><div class="a" style="left:54px;top:218px;width:3px;height:9px;background:#fff"></div><div class="a" style="left:54px;top:229px;width:3px;height:3px;background:#fff"></div>
<svg class="a" style="left:63px;top:221px" width="8" height="6"><path d="M0 0h8L4 6z" fill="#1e1e1e"/></svg>
<svg class="a" style="left:74px;top:215px" width="18" height="18"><path d="M2 16V5l5-4 6 4v3l3 3-4 5z" fill="none" stroke="#1e1e1e" stroke-width="1.3"/><circle cx="8" cy="11" r="3" fill="none" stroke="#1e1e1e" stroke-width="1.5"/></svg>
<svg class="a" style="left:94px;top:216px" width="14" height="16"><path d="M1 1h12v2H10v12H7V3H4v5H1z" fill="none" stroke="#1e1e1e" stroke-width="1.2"/><rect x="1" y="10" width="5" height="5" fill="#1e1e1e"/><path d="M8 6h2M8 9h2M8 12h2" stroke="#1e1e1e"/></svg>
<div class="a" style="left:108px;top:217px;width:366px;height:16px;overflow:hidden"><div class="tt" style="left:0;top:0">(−)ППАБ.00.00.000 Бункер (Тел-0, Сборочных единиц-9, Деталей-3</div></div>
<svg class="a" style="left:4px;top:244px" width="16" height="12"><path d="M0.5 6Q8 -2.5 15.5 6Q8 14.5 0.5 6z" fill="#1a1a1a"/><circle cx="8" cy="6" r="3.9" fill="#e6e6e6"/><circle cx="8" cy="6" r="2.1" fill="#1a1a1a"/></svg>
<svg class="a" style="left:74px;top:247px" width="6" height="7"><path d="M0 0l5 3.5L0 7z" fill="#1e1e1e"/></svg>
<svg class="a" style="left:85px;top:240px" width="18" height="18"><rect x="7" y="4" width="7" height="6" fill="none" stroke="#1e1e1e" stroke-width="1.1"/><path d="M7 1v9M7 10h9M7 10L2 15M4 10a4 4 0 0 0 4 4" fill="none" stroke="#1e1e1e" stroke-width="1.1"/></svg>
<div class="tt" style="left:103px;top:243px;color:#222">Системы координат</div>
<svg class="a" style="left:4px;top:270px" width="16" height="12"><path d="M0.5 6Q8 -2.5 15.5 6Q8 14.5 0.5 6z" fill="#1a1a1a"/><circle cx="8" cy="6" r="3.9" fill="#e6e6e6"/><circle cx="8" cy="6" r="2.1" fill="#1a1a1a"/></svg>
<svg class="a" style="left:3px;top:269px" width="18" height="15"><path d="M1 1l15 13" stroke="#1e1e1e" stroke-width="1.2"/></svg>
<svg class="a" style="left:32px;top:270px" width="14" height="14"><path d="M12 1.5H7A5 5.5 0 0 0 7 12.5h5M2 7h10" fill="none" stroke="#1e1e1e" stroke-width="1.2"/></svg>
<svg class="a" style="left:74px;top:273px" width="6" height="7"><path d="M0 0l5 3.5L0 7z" fill="#1e1e1e"/></svg>
<svg class="a" style="left:85px;top:266px" width="18" height="18"><circle cx="7" cy="3" r="1.5" fill="none" stroke="#777"/><circle cx="14" cy="10" r="1.5" fill="none" stroke="#777"/><path d="M7 4.5V10h5.5" stroke="#777" fill="none"/><rect x="1" y="10" width="5" height="5" fill="none" stroke="#777"/></svg>
<svg class="a" style="left:104px;top:268px" width="14" height="16"><path d="M1 1h12v2H10v12H7V3H4v5H1z" fill="none" stroke="#8a8a8a" stroke-width="1.2"/><rect x="1" y="10" width="5" height="5" fill="#8a8a8a"/><path d="M8 6h2M8 9h2M8 12h2" stroke="#8a8a8a"/></svg>
<div class="tt" style="left:118px;top:269px;color:#8a8a8a">Компоновочная геометрия</div>
<svg class="a" style="left:4px;top:296px" width="16" height="12"><path d="M0.5 6Q8 -2.5 15.5 6Q8 14.5 0.5 6z" fill="#1a1a1a"/><circle cx="8" cy="6" r="3.9" fill="#e6e6e6"/><circle cx="8" cy="6" r="2.1" fill="#1a1a1a"/></svg>
<svg class="a" style="left:32px;top:296px" width="14" height="14"><path d="M12 1.5H7A5 5.5 0 0 0 7 12.5h5M2 7h10" fill="none" stroke="#1e1e1e" stroke-width="1.2"/></svg>
<svg class="a" style="left:74px;top:299px" width="6" height="7"><path d="M0 0l5 3.5L0 7z" fill="#1e1e1e"/></svg>
<svg class="a" style="left:85px;top:292px" width="18" height="18"><path d="M5 16C1 12 2 6 7 7s4 4 6-1" fill="none" stroke="#1e1e1e" stroke-width="1.1"/><path d="M13 1l1 4" stroke="#1e1e1e"/></svg>
<div class="tt" style="left:103px;top:295px;color:#222">Кривые и точки</div>
<svg class="a" style="left:4px;top:322px" width="16" height="12"><path d="M0.5 6Q8 -2.5 15.5 6Q8 14.5 0.5 6z" fill="#1a1a1a"/><circle cx="8" cy="6" r="3.9" fill="#e6e6e6"/><circle cx="8" cy="6" r="2.1" fill="#1a1a1a"/></svg>
<svg class="a" style="left:32px;top:322px" width="14" height="14"><path d="M12 1.5H7A5 5.5 0 0 0 7 12.5h5M2 7h10" fill="none" stroke="#1e1e1e" stroke-width="1.2"/></svg>
<div class="a" style="left:51px;top:317px;width:10px;height:24px;background:#e94a4a"></div><div class="a" style="left:54px;top:322px;width:3px;height:9px;background:#fff"></div><div class="a" style="left:54px;top:333px;width:3px;height:3px;background:#fff"></div>
<svg class="a" style="left:74px;top:325px" width="6" height="7"><path d="M0 0l5 3.5L0 7z" fill="#1e1e1e"/></svg>
<svg class="a" style="left:85px;top:318px" width="18" height="18"><path d="M3 1v14h10M3 8h7" fill="none" stroke="#1e1e1e" stroke-width="1.2"/><path d="M1 1h4l-2 3z" fill="#1e1e1e"/><rect x="9" y="6" width="5" height="4" fill="none" stroke="#1e1e1e"/><rect x="12" y="12" width="5" height="5" fill="none" stroke="#1e1e1e"/></svg>
<svg class="a" style="left:104px;top:320px" width="14" height="16"><path d="M1 1h12v2H10v12H7V3H4v5H1z" fill="none" stroke="#1e1e1e" stroke-width="1.2"/><rect x="1" y="10" width="5" height="5" fill="#1e1e1e"/><path d="M8 6h2M8 9h2M8 12h2" stroke="#1e1e1e"/></svg>
<div class="tt" style="left:118px;top:321px;color:#222">Компоненты</div>
<svg class="a" style="left:32px;top:348px" width="14" height="14"><path d="M12 1.5H7A5 5.5 0 0 0 7 12.5h5M2 7h10" fill="none" stroke="#1e1e1e" stroke-width="1.2"/></svg>
<svg class="a" style="left:74px;top:351px" width="6" height="7"><path d="M0 0l5 3.5L0 7z" fill="#1e1e1e"/></svg>
<svg class="a" style="left:85px;top:344px" width="18" height="18"><path d="M3 15L12 4a2.5 2.5 0 0 1 4 3L8 16a2 2 0 0 1-3-2l7-8" fill="none" stroke="#1e1e1e" stroke-width="1.1"/></svg>
<div class="tt" style="left:103px;top:347px;color:#222">Сопряжения</div>
<svg class="a" style="left:4px;top:374px" width="16" height="12"><path d="M0.5 6Q8 -2.5 15.5 6Q8 14.5 0.5 6z" fill="#1a1a1a"/><circle cx="8" cy="6" r="3.9" fill="#e6e6e6"/><circle cx="8" cy="6" r="2.1" fill="#1a1a1a"/></svg>
<svg class="a" style="left:32px;top:374px" width="14" height="14"><path d="M12 1.5H7A5 5.5 0 0 0 7 12.5h5M2 7h10" fill="none" stroke="#1e1e1e" stroke-width="1.2"/></svg>
<svg class="a" style="left:74px;top:377px" width="6" height="7"><path d="M0 0l5 3.5L0 7z" fill="#1e1e1e"/></svg>
<svg class="a" style="left:85px;top:370px" width="18" height="18"><circle cx="2" cy="15" r="1.2" fill="#1e1e1e"/><circle cx="3" cy="8" r="1.2" fill="#1e1e1e"/><circle cx="9" cy="3" r="1.2" fill="none" stroke="#1e1e1e"/><circle cx="10" cy="10" r="1" fill="#1e1e1e"/><circle cx="16" cy="7" r="1.2" fill="none" stroke="#1e1e1e"/><circle cx="16" cy="15" r="1.2" fill="#1e1e1e"/></svg>
<div class="tt" style="left:103px;top:373px;color:#222">Массив по точкам:1</div>
<svg class="a" style="left:4px;top:400px" width="16" height="12"><path d="M0.5 6Q8 -2.5 15.5 6Q8 14.5 0.5 6z" fill="#1a1a1a"/><circle cx="8" cy="6" r="3.9" fill="#e6e6e6"/><circle cx="8" cy="6" r="2.1" fill="#1a1a1a"/></svg>
<svg class="a" style="left:32px;top:400px" width="14" height="14"><path d="M12 1.5H7A5 5.5 0 0 0 7 12.5h5M2 7h10" fill="none" stroke="#1e1e1e" stroke-width="1.2"/></svg>
<svg class="a" style="left:74px;top:403px" width="6" height="7"><path d="M0 0l5 3.5L0 7z" fill="#1e1e1e"/></svg>
<svg class="a" style="left:85px;top:396px" width="18" height="18"><circle cx="3" cy="3" r="1.6" fill="none" stroke="#1e1e1e" stroke-width="1.1"/><circle cx="3" cy="9" r="1.6" fill="none" stroke="#1e1e1e" stroke-width="1.1"/><circle cx="3" cy="15" r="1.6" fill="none" stroke="#1e1e1e" stroke-width="1.1"/><circle cx="9" cy="3" r="1.6" fill="none" stroke="#1e1e1e" stroke-width="1.1"/><circle cx="9" cy="9" r="1.6" fill="none" stroke="#1e1e1e" stroke-width="1.1"/><circle cx="9" cy="15" r="1.6" fill="none" stroke="#1e1e1e" stroke-width="1.1"/><circle cx="15" cy="3" r="1.6" fill="none" stroke="#1e1e1e" stroke-width="1.1"/><circle cx="15" cy="9" r="1.6" fill="none" stroke="#1e1e1e" stroke-width="1.1"/><circle cx="15" cy="15" r="1.6" fill="none" stroke="#1e1e1e" stroke-width="1.1"/></svg>
<div class="tt" style="left:103px;top:399px;color:#222">Массив по сетке:1</div>
<div class="a" style="left:0;top:859px;width:474px;height:2px;background:#6a6a6a"></div>
<div class="a" style="left:0;top:22px;width:1857px;height:1px;background:#6e6e6e"></div>
<div class="a" style="left:0;top:23px;width:1857px;height:20px;background:#b4b4b4"></div>
<div class="a" style="left:0;top:43px;width:1857px;height:5px;background:#676767"></div>
<div class="a" style="left:0;top:23px;width:19px;height:20px;background:#c2c2c2"></div>
<svg class="a" style="left:3px;top:26px" width="13" height="13"><path d="M6.5 1v11M1 6.5h11" stroke="#333" stroke-width="1.3"/></svg>
<div class="a" style="left:19px;top:23px;width:168px;height:20px;background:#5b5b5b"></div>
<svg class="a" style="left:25px;top:26px" width="15" height="15"><path d="M2 13V4l4-3 6 4v3l2 2-3 3z" fill="none" stroke="#f0f0f0" stroke-width="1.3"/><circle cx="7" cy="9" r="2.6" fill="none" stroke="#f0f0f0" stroke-width="1.4"/></svg>
<div class="a" style="left:45px;top:27px;font-size:11px;color:#f2f2f2">ППАБ.00.00.000 - Бун...</div>
<svg class="a" style="left:172px;top:28px" width="10" height="10"><path d="M1 1l8 8M9 1l-8 8" stroke="#f0f0f0" stroke-width="1.4"/></svg>
<svg class="a" style="left:193px;top:26px" width="15" height="15"><path d="M2 13V4l4-3 6 4v3l2 2-3 3z" fill="none" stroke="#2a2a2a" stroke-width="1.3"/><circle cx="7" cy="9" r="2.6" fill="none" stroke="#2a2a2a" stroke-width="1.4"/></svg>
<div class="a" style="left:213px;top:27px;font-size:11.6px;color:#2a2a2a">Компоновка бункер...</div>
<svg class="a" style="left:362px;top:26px" width="15" height="15"><path d="M2 13V4l4-3 6 4v3l2 2-3 3z" fill="none" stroke="#2a2a2a" stroke-width="1.3"/><circle cx="7" cy="9" r="2.6" fill="none" stroke="#2a2a2a" stroke-width="1.4"/></svg>
<div class="a" style="left:382px;top:27px;font-size:11.6px;color:#2a2a2a">Компоновка общая....</div>
<svg class="a" style="left:531px;top:26px" width="15" height="15"><path d="M2 13V4l4-3 6 4v3l2 2-3 3z" fill="none" stroke="#2a2a2a" stroke-width="1.3"/><circle cx="7" cy="9" r="2.6" fill="none" stroke="#2a2a2a" stroke-width="1.4"/></svg>
<div class="a" style="left:551px;top:27px;font-size:11.6px;color:#2a2a2a">РРА.0107.00.00.000 - А...</div>
<div class="a" style="left:356px;top:23px;width:1px;height:20px;background:#888"></div>
<div class="a" style="left:525px;top:23px;width:1px;height:20px;background:#888"></div>
<div class="a" style="left:694px;top:23px;width:1px;height:20px;background:#888"></div>
<svg class="a" style="left:1531px;top:2px" width="18" height="16"><rect x="1" y="2" width="15" height="12" fill="none" stroke="#333" stroke-width="1.2"/><path d="M1 5h15" stroke="#333" stroke-width="1.2"/><path d="M9 5l1.5 1.5L12 5" fill="#333"/></svg>
<div class="a" style="left:1558px;top:0;width:200px;height:21px;background:#fff;border:1px solid #d0d0d0;border-top:none"></div>
<svg class="a" style="left:1564px;top:3px" width="14" height="14"><circle cx="8" cy="6" r="4" fill="none" stroke="#999" stroke-width="1.2"/><path d="M5 9l-4 4" stroke="#999" stroke-width="1.4"/></svg>
<div class="a" style="left:1583px;top:3px;font-size:12.4px;color:#8a8a8a">Поиск по командам (Alt+/)</div>
<div class="a" style="left:1773px;top:11px;width:12px;height:2px;background:#222"></div>
<svg class="a" style="left:1803px;top:3px" width="14" height="13"><rect x="1" y="4" width="9" height="8" fill="none" stroke="#222" stroke-width="1.4"/><path d="M4 4V1h9v8h-3" fill="none" stroke="#222" stroke-width="1.4"/></svg>
<svg class="a" style="left:1835px;top:3px" width="12" height="12"><path d="M1.5 1.5l9 9M10.5 1.5l-9 9" stroke="#222" stroke-width="2"/></svg>
<div class="a" style="left:0;top:48px;width:1857px;height:75px;background:#f1f1f1"></div>
<div class="a" style="left:0;top:123px;width:1857px;height:17px;background:linear-gradient(#e9e9e9 0,#e9e9e9 2px,#e3e3e3 2px)"></div>
<div class="a" style="left:0;top:140px;width:1857px;height:1px;background:#6c6c6c"></div>
<div class="a" style="left:116px;top:48px;width:1px;height:92px;background:#cfcfcf"></div>
<div class="a" style="left:194px;top:48px;width:1px;height:92px;background:#cfcfcf"></div>
<div class="a" style="left:314px;top:48px;width:1px;height:92px;background:#cfcfcf"></div>
<div class="a" style="left:554px;top:48px;width:1px;height:92px;background:#cfcfcf"></div>
<div class="a" style="left:674px;top:48px;width:1px;height:92px;background:#cfcfcf"></div>
<div class="a" style="left:794px;top:48px;width:1px;height:92px;background:#cfcfcf"></div>
<div class="a" style="left:846px;top:48px;width:1px;height:92px;background:#cfcfcf"></div>
<div class="a" style="left:898px;top:48px;width:1px;height:92px;background:#cfcfcf"></div>
<div class="a" style="left:976px;top:48px;width:1px;height:92px;background:#cfcfcf"></div>
<div class="a" style="left:1096px;top:48px;width:1px;height:92px;background:#cfcfcf"></div>
<div class="a" style="left:1216px;top:48px;width:1px;height:92px;background:#cfcfcf"></div>
<div class="a" style="left:1336px;top:48px;width:1px;height:92px;background:#cfcfcf"></div>
<div class="a" style="left:0;top:48px;width:116px;height:25px;background:#4b4b4b"></div>
<svg class="a" style="left:4px;top:52px" width="16" height="16"><path d="M2 14V5l5-4 6 4v3l2 2-3 4z" fill="#3a6f9a" stroke="#4f8fc4" stroke-width="1"/><circle cx="8" cy="9.5" r="2.5" fill="none" stroke="#9cc8ea" stroke-width="1.3"/></svg>
<div class="a" style="left:25px;top:53px;font-size:12px;color:#fff">Сборка</div>
<svg class="a" style="left:5px;top:77px" width="13" height="16"><rect x="1" y="1" width="11" height="14" fill="#2f86c8"/><path d="M3 4h7M3 7h7M3 10h7M3 13h7M5 2v12M8 2v12" stroke="#cfe6f7" stroke-width="1"/></svg>
<div class="a" style="left:25px;top:78px;font-size:12px;color:#222">Управление</div>
<svg class="a" style="left:3px;top:101px" width="18" height="18"><path d="M1 5l4-3h12v12l-4 3H1z" fill="#8cc6ee"/><path d="M13 17V5l4-3v12z" fill="#2f86c8"/><path d="M1 5h12l4-3H5z" fill="#2f86c8"/></svg>
<div class="a" style="left:25px;top:100px;font-size:12px;line-height:11px;color:#222">Твердотельное<br>моделирование</div>
<svg class="a" style="left:53px;top:126px" width="9" height="9"><path d="M1 1l3.5 3L8 1M1 5l3.5 3L8 5" fill="none" stroke="#333" stroke-width="1"/></svg>
<div class="a" style="left:122px;top:52px"><svg width="17" height="17"><path d="M3 1h7l4 4v11H3z" fill="#9fd0f2"/><path d="M10 1l4 4h-4z" fill="#2f86c8"/></svg></div>
<div class="a" style="left:147px;top:52px"><svg width="17" height="17"><path d="M1 4h6l1.5 2H15v8H1z" fill="#2f86c8"/><path d="M1 6h6l1-1h6" fill="none" stroke="#e6b35a" stroke-width="1.5"/></svg></div>
<div class="a" style="left:173px;top:52px"><svg width="17" height="17"><path d="M1 1h12l3 3v12H1z" fill="#2f86c8"/><rect x="4" y="9" width="9" height="7" fill="#9fd0f2"/><rect x="4" y="8" width="9" height="1.5" fill="#f0a23a"/><rect x="8" y="2" width="1.5" height="4" fill="#fff"/></svg></div>
<div class="a" style="left:121px;top:77px"><svg width="17" height="17"><rect x="3" y="1" width="10" height="4" fill="none" stroke="#2f86c8" stroke-width="1.5"/><rect x="1" y="5" width="15" height="7" rx="1" fill="#2f86c8"/><rect x="4" y="10" width="9" height="5" fill="#9fd0f2" stroke="#2f86c8"/></svg></div>
<div class="a" style="left:147px;top:77px"><svg width="17" height="17"><path d="M6 1h6l3 3v12H6z" fill="#2f86c8"/><circle cx="8" cy="9" r="3.2" fill="#9fd0f2" stroke="#2f86c8" stroke-width="1.3"/><path d="M5.5 11.5L2 15" stroke="#2f86c8" stroke-width="1.6"/></svg></div>
<div class="a" style="left:173px;top:77px"><svg width="17" height="17"><path d="M1 1h12l3 3v12H1z" fill="#2f86c8"/><rect x="8" y="2" width="1.5" height="4" fill="#fff"/><path d="M9 14l6-6" stroke="#f0a23a" stroke-width="2"/></svg></div>
<div class="a" style="left:121px;top:102px"><svg width="17" height="17"><path d="M2 8l5-5v3h4a5 5 0 0 1 3 9 4 4 0 0 0-3-5H7v3z" fill="none" stroke="#d4d4d4" stroke-width="1.2"/></svg></div>
<div class="a" style="left:147px;top:102px"><svg width="17" height="17"><path d="M15 8l-5-5v3H6a5 5 0 0 0-3 9 4 4 0 0 1 3-5h4v3z" fill="none" stroke="#d4d4d4" stroke-width="1.2"/></svg></div>
<div class="lbl" style="left:127px">Системная</div>
<svg class="a" style="left:200px;top:52px" width="17" height="17"><path d="M0 0h9v5h-4v6h6V7h5v9H0z" fill="#2f7fc1"/><path d="M0 11h5v5H0z" fill="#8fc8ee"/><rect x="10" y="0" width="6" height="5" fill="#2f7fc1"/><circle cx="7.5" cy="8.5" r="4.2" fill="none" stroke="#2f7fc1" stroke-width="2.4"/><circle cx="7.5" cy="8.5" r="2.2" fill="#d7ecfa"/></svg>
<svg class="a" style="left:213px;top:65px" width="5" height="5"><path d="M5 0v5H0z" fill="#1a1a1a"/></svg>
<div class="a" style="left:221px;top:50px;font-size:11px;line-height:10.5px;color:#222">Добавить<br>компонент из...</div>
<svg class="a" style="left:200px;top:77px" width="17" height="17"><path d="M0 2h9v4h-4v5h6V8h5v8H0z" fill="#2f7fc1"/><path d="M0 11h5v5H0z" fill="#8fc8ee"/><circle cx="7.5" cy="9.5" r="4.2" fill="none" stroke="#2f7fc1" stroke-width="2.4"/><circle cx="7.5" cy="9.5" r="2.2" fill="#d7ecfa"/><path d="M13 0v6M10 3h6" stroke="#1d4f7a" stroke-width="1.4"/></svg>
<svg class="a" style="left:213px;top:90px" width="5" height="5"><path d="M5 0v5H0z" fill="#1a1a1a"/></svg>
<div class="a" style="left:221px;top:80px;font-size:11px;line-height:10.5px;color:#222">Создать деталь</div>
<svg class="a" style="left:200px;top:102px" width="17" height="17"><rect x="0" y="2" width="7" height="6" fill="#b8cfe0"/><path d="M11 1v6M8 4h6" stroke="#f0a030" stroke-width="1.4"/><path d="M0 16L11 5" stroke="#2a4a66" stroke-width="1"/><rect x="9" y="9" width="7" height="7" fill="none" stroke="#2f7fc1" stroke-width="1.5"/><circle cx="12.5" cy="12.5" r="1.5" fill="none" stroke="#2f7fc1" stroke-width="1.2"/></svg>
<div class="a" style="left:221px;top:100px;font-size:11px;line-height:10.5px;color:#222">Зеркальное<br>отражение ко...</div>
<div class="lbl" style="left:221px">Компоненты</div>
<svg class="a" style="left:320px;top:52px" width="17" height="17"><path d="M0 9l4-4h8v8H0z" fill="#2f7fc1"/><rect x="1.5" y="9.5" width="9" height="4" fill="#d7ecfa"/><path d="M12 5l4-3v8l-4 3z" fill="#1d6fae"/><path d="M5 5l3-5h5l-2 5z" fill="#8fc8ee"/></svg>
<svg class="a" style="left:333px;top:65px" width="5" height="5"><path d="M5 0v5H0z" fill="#1a1a1a"/></svg>
<div class="a" style="left:341px;top:55px;font-size:11px;line-height:10.5px;color:#222">Совпадение</div>
<svg class="a" style="left:320px;top:77px" width="17" height="17"><rect x="6" y="2" width="8" height="8" fill="none" stroke="#c8c8c8" stroke-width="1.4"/><path d="M4 8v8M1 13h7" stroke="#cfcfcf" stroke-width="1.2"/></svg>
<div class="a" style="left:341px;top:75px;font-size:11px;line-height:10.5px;color:#b9b9b9">Включить<br>фиксацию</div>
<svg class="a" style="left:320px;top:102px" width="17" height="17"><path d="M1 3h13M1 3l3-2M1 3l3 2M14 3l-3-2M14 3l-3 2" fill="none" stroke="#1d6fae" stroke-width="1.3"/><path d="M2 8h10v8H2z" fill="#8fc8ee"/><path d="M2 8l2-2h10l-2 2zM12 8l2-2v8l-2 2z" fill="#2f7fc1"/></svg>
<svg class="a" style="left:333px;top:115px" width="5" height="5"><path d="M5 0v5H0z" fill="#1a1a1a"/></svg>
<div class="a" style="left:341px;top:100px;font-size:11px;line-height:10.5px;color:#222">Переместить<br>компонент</div>
<svg class="a" style="left:440px;top:52px" width="17" height="17"><circle cx="10" cy="6" r="5" fill="none" stroke="#2f7fc1" stroke-width="2"/><circle cx="10" cy="6" r="2.6" fill="#e4f2fb"/><path d="M10 4v2h1.5" stroke="#333" stroke-width="0.6" fill="none"/><circle cx="4" cy="12" r="3.5" fill="#8fc8ee"/><circle cx="4" cy="12" r="1.5" fill="#e4f2fb"/></svg>
<svg class="a" style="left:453px;top:65px" width="5" height="5"><path d="M5 0v5H0z" fill="#1a1a1a"/></svg>
<div class="a" style="left:461px;top:50px;font-size:11px;line-height:10.5px;color:#222">Вращение-<br>вращение</div>
<svg class="a" style="left:440px;top:77px" width="17" height="17"><rect x="6" y="2" width="8" height="8" fill="none" stroke="#c8c8c8" stroke-width="1.4"/><path d="M4 8v8M1 13h7" stroke="#cfcfcf" stroke-width="1.2"/></svg>
<div class="a" style="left:461px;top:75px;font-size:11px;line-height:10.5px;color:#b9b9b9">Отключить<br>фиксацию</div>
<div class="lbl" style="left:370px">Размещение компонентов</div>
<svg class="a" style="left:560px;top:52px" width="17" height="17"><rect x="0" y="0" width="16" height="16" fill="#8fc8ee"/><path d="M0 4l4-4M0 10l10-10M0 16L16 0M6 16L16 6M12 16l4-4" stroke="#e8f4fc" stroke-width="1.2"/><path d="M0 0h16" stroke="#2f7fc1" stroke-width="1.4"/><path d="M5 0v11l3 3 3-3V0" fill="#eaf5fd" stroke="#2f7fc1" stroke-width="1.5"/></svg>
<svg class="a" style="left:573px;top:65px" width="5" height="5"><path d="M5 0v5H0z" fill="#1a1a1a"/></svg>
<div class="a" style="left:581px;top:50px;font-size:11px;line-height:10.5px;color:#222">Отверстие<br>простое</div>
<svg class="a" style="left:560px;top:77px" width="17" height="17"><path d="M0 2l2-2h14v14l-2 2H0z" fill="#8fc8ee"/><path d="M0 2l2-2h14l-2 2zM14 2l2-2v14l-2 2z" fill="#2f7fc1"/><rect x="3" y="5" width="8" height="8" fill="#cfe8f8"/><path d="M4 6h2v5h5v2H4z" fill="#1d6fae"/></svg>
<svg class="a" style="left:573px;top:90px" width="5" height="5"><path d="M5 0v5H0z" fill="#1a1a1a"/></svg>
<div class="a" style="left:581px;top:75px;font-size:11px;line-height:10.5px;color:#222">Вырезать<br>выдавливанием</div>
<svg class="a" style="left:560px;top:102px" width="17" height="17"><path d="M0 3l3-3h13v13l-3 3H0z" fill="#8fc8ee"/><path d="M0 3l3-3h13l-3 3zM13 3l3-3v13l-3 3z" fill="#2f7fc1"/><path d="M6 3v13" stroke="#1d6fae" stroke-width="2"/></svg>
<div class="a" style="left:581px;top:105px;font-size:11px;line-height:10.5px;color:#222">Сечение</div>
<div class="lbl" style="left:579px">Операции</div>
<svg class="a" style="left:650px;top:129px" width="9" height="6"><path d="M0 0h9L4.5 5z" fill="#222"/></svg>
<svg class="a" style="left:680px;top:52px" width="17" height="17"><circle cx="2.5" cy="2.5" r="1.9" fill="#2f7fc1" stroke="#1d6fae" stroke-width="0.6"/><circle cx="2.5" cy="8.0" r="1.9" fill="#2f7fc1" stroke="#1d6fae" stroke-width="0.6"/><circle cx="2.5" cy="13.5" r="1.9" fill="#2f7fc1" stroke="#1d6fae" stroke-width="0.6"/><circle cx="8.0" cy="2.5" r="1.9" fill="#2f7fc1" stroke="#1d6fae" stroke-width="0.6"/><circle cx="8.0" cy="8.0" r="1.9" fill="#2f7fc1" stroke="#1d6fae" stroke-width="0.6"/><circle cx="8.0" cy="13.5" r="1.9" fill="#2f7fc1" stroke="#1d6fae" stroke-width="0.6"/><circle cx="13.5" cy="2.5" r="1.9" fill="#2f7fc1" stroke="#1d6fae" stroke-width="0.6"/><circle cx="13.5" cy="8.0" r="1.9" fill="#2f7fc1" stroke="#1d6fae" stroke-width="0.6"/><circle cx="13.5" cy="13.5" r="1.9" fill="#2f7fc1" stroke="#1d6fae" stroke-width="0.6"/></svg>
<svg class="a" style="left:693px;top:65px" width="5" height="5"><path d="M5 0v5H0z" fill="#1a1a1a"/></svg>
<div class="a" style="left:701px;top:50px;font-size:11px;line-height:10.5px;color:#222">Массив по<br>сетке</div>
<svg class="a" style="left:680px;top:77px" width="17" height="17"><rect x="0" y="5" width="9" height="10" fill="none" stroke="#f0a030" stroke-width="1.1" stroke-dasharray="1.6 1"/><path d="M6 3a4 2 0 0 1 9 0v9a4 2 0 0 1-9 0z" fill="#eef7fd" stroke="#2f7fc1" stroke-width="1.4"/><ellipse cx="10.5" cy="3" rx="4.5" ry="2.2" fill="#2f7fc1"/></svg>
<div class="a" style="left:701px;top:75px;font-size:11px;line-height:10.5px;color:#222">Копировать<br>объекты</div>
<svg class="a" style="left:680px;top:102px" width="17" height="17"><path d="M3 2a2.5 2.5 0 1 1 0 5a2.5 2.5 0 1 0 0 5" fill="none" stroke="#1d4f7a" stroke-width="1.1"/><circle cx="12" cy="4" r="2.8" fill="#9fcbe0"/><path d="M0 16l5-6h9l2 3-3 3z" fill="#2f7fc1"/></svg>
<div class="a" style="left:701px;top:100px;font-size:11px;line-height:10.5px;color:#222">Коллекция<br>геометрии</div>
<div class="lbl" style="left:679px">Массив, копирование</div>
<svg class="a" style="left:800px;top:52px" width="17" height="17"><path d="M2 8l5-3 7 2-5 3z" fill="#8fc8ee"/><path d="M2 8l7 2v6l-7-3z" fill="#2f7fc1"/><path d="M8 0v9M8 9l7 -1M8 9L1 15" stroke="#f0a030" stroke-width="1.3" fill="none"/></svg>
<svg class="a" style="left:825px;top:52px" width="17" height="17"><circle cx="5" cy="2" r="1.8" fill="none" stroke="#2f7fc1" stroke-width="1.1"/><path d="M5 4v9M5 8h6" stroke="#2f7fc1" stroke-width="1.1"/><circle cx="12" cy="8" r="1.8" fill="none" stroke="#2f7fc1" stroke-width="1.1"/><rect x="9" y="1" width="6" height="3" fill="#2f7fc1"/><rect x="1" y="11" width="5" height="5" fill="#2f7fc1"/></svg>
<svg class="a" style="left:800px;top:77px" width="17" height="17"><path d="M3 6l3-4h10l-3 4z" fill="#f0a030"/><path d="M1 14l3-4h10l-3 4z" fill="#8fc8ee"/></svg>
<svg class="a" style="left:813px;top:90px" width="5" height="5"><path d="M5 0v5H0z" fill="#1a1a1a"/></svg>
<svg class="a" style="left:825px;top:77px" width="17" height="17"><rect x="1" y="7" width="11" height="8" fill="none" stroke="#2f7fc1" stroke-width="1.3"/><circle cx="5" cy="11" r="2" fill="none" stroke="#2f7fc1" stroke-width="1.1"/><path d="M8 1h6v4l-2 2h-2l-2-2z" fill="#2f7fc1"/><rect x="11" y="6" width="4" height="3" fill="#2f7fc1"/></svg>
<svg class="a" style="left:838px;top:90px" width="5" height="5"><path d="M5 0v5H0z" fill="#1a1a1a"/></svg>
<svg class="a" style="left:800px;top:102px" width="17" height="17"><path d="M1 15L15 1" stroke="#f0a030" stroke-width="1.1"/><circle cx="5" cy="11" r="1.9" fill="#fff" stroke="#2f7fc1" stroke-width="1.1"/><circle cx="10" cy="6" r="1.9" fill="#fff" stroke="#2f7fc1" stroke-width="1.1"/></svg>
<svg class="a" style="left:813px;top:115px" width="5" height="5"><path d="M5 0v5H0z" fill="#1a1a1a"/></svg>
<svg class="a" style="left:852px;top:52px" width="17" height="17"><path d="M1 1v13M15 1v13M1 2h14" fill="none" stroke="#2f7fc1" stroke-width="1.2"/><path d="M1 2h14" stroke="#f0a030" stroke-width="1"/><path d="M1 10h13l2 2-2 2H1z" fill="#8fc8ee"/><path d="M1 12h13" stroke="#2f7fc1" stroke-width="1.3"/></svg>
<svg class="a" style="left:877px;top:52px" width="17" height="17"><ellipse cx="7" cy="10" rx="7" ry="4.5" fill="#2f7fc1"/><ellipse cx="7" cy="9" rx="6" ry="3" fill="#5aa5dc"/><circle cx="12" cy="3" r="2.6" fill="none" stroke="#2f7fc1" stroke-width="1"/><path d="M10 5l4-4" stroke="#2f7fc1" stroke-width="0.9"/></svg>
<svg class="a" style="left:852px;top:77px" width="17" height="17"><path d="M1 8a8 5 0 0 1 14 0L8 4z" fill="#2f7fc1"/><path d="M1 13L8 4l7 9" fill="none" stroke="#1d4f7a" stroke-width="1.2"/><path d="M4 15a5 3 0 0 0 8 0" fill="none" stroke="#f0a030" stroke-width="1"/></svg>
<svg class="a" style="left:877px;top:77px" width="17" height="17"><ellipse cx="7" cy="10" rx="7" ry="4.5" fill="#2f7fc1"/><ellipse cx="7" cy="9" rx="6" ry="3" fill="#5aa5dc"/><text x="10" y="5" font-size="6" font-family="Liberation Sans" fill="#2f7fc1">R</text></svg>
<svg class="a" style="left:852px;top:102px" width="17" height="17"><rect x="1" y="5" width="10" height="10" fill="#8fc8ee"/><path d="M11 3v13" stroke="#2f7fc1" stroke-width="1.5"/><path d="M1 2h9" stroke="#f0a030" stroke-width="1.2"/><path d="M13 6v8" stroke="#f0a030" stroke-width="1.2"/><circle cx="6" cy="10" r="2.5" fill="#d7ecfa"/></svg>
<svg class="a" style="left:877px;top:102px" width="17" height="17"><path d="M3 8l6 7h6V9L9 3" fill="none" stroke="#2f7fc1" stroke-width="1.2"/><path d="M1 7l6 7M9 2l6 6" stroke="#f0a030" stroke-width="1"/><path d="M6 5a3 3 0 0 0-3-3" fill="none" stroke="#2f7fc1" stroke-width="1.1"/></svg>
<svg class="a" style="left:903px;top:52px" width="17" height="17"><path d="M2 11l8-9a3 3 0 0 1 5 4l-8 9a3 3 0 0 1-5-4z" fill="#8fc8ee"/><path d="M6 7l4 4M8 5l4 4M10 3l4 4" stroke="#2f7fc1" stroke-width="1.3"/></svg>
<svg class="a" style="left:929px;top:52px" width="17" height="17"><path d="M1 13h13l2 2H1z" fill="#2f7fc1"/><path d="M2 12h12" stroke="#8fc8ee" stroke-width="2"/><path d="M5 11l5-9h5" fill="none" stroke="#f0a030" stroke-width="1.2"/><path d="M4 12l2-3h-2z" fill="#f0a030"/></svg>
<svg class="a" style="left:955px;top:52px" width="17" height="17"><path d="M1 13h13l2 2H1z" fill="#2f7fc1"/><path d="M2 12h12" stroke="#8fc8ee" stroke-width="2"/><path d="M5 11l4-7" stroke="#f0a030" stroke-width="1.2"/><path d="M15 1h-5v6h5M10 4h4" fill="none" stroke="#f0a030" stroke-width="1.2"/></svg>
<svg class="a" style="left:903px;top:77px" width="17" height="17"><path d="M1 13h13l2 2H1z" fill="#2f7fc1"/><path d="M2 12h12" stroke="#8fc8ee" stroke-width="2"/><path d="M2 6l5 6 8-11" fill="none" stroke="#f0a030" stroke-width="1.2"/><path d="M3 6h8" stroke="#f0a030" stroke-width="1"/></svg>
<svg class="a" style="left:929px;top:77px" width="17" height="17"><path d="M1 13h13l2 2H1z" fill="#2f7fc1"/><path d="M2 12h12" stroke="#8fc8ee" stroke-width="2"/><rect x="4" y="1" width="8" height="7" fill="none" stroke="#f0a030" stroke-width="1.2"/><path d="M8 8v4" stroke="#f0a030" stroke-width="1.2"/><text x="5.5" y="7" font-size="5.5" font-family="Liberation Sans" fill="#f0a030">A</text></svg>
<svg class="a" style="left:955px;top:77px" width="17" height="17"><path d="M1 13h13l2 2H1z" fill="#2f7fc1"/><path d="M2 12h12" stroke="#8fc8ee" stroke-width="2"/><path d="M5 12V1h10v6H5M9 1v6M12 1v6" fill="none" stroke="#f0a030" stroke-width="1.2"/></svg>
<svg class="a" style="left:903px;top:102px" width="17" height="17"><path d="M1 13h13l2 2H1z" fill="#2f7fc1"/><path d="M2 12h12" stroke="#8fc8ee" stroke-width="2"/><path d="M8 1l5 7H3z" fill="none" stroke="#f0a030" stroke-width="1.2"/><path d="M8 8v4M5 10h6" stroke="#f0a030" stroke-width="1.1"/></svg>
<svg class="a" style="left:916px;top:115px" width="5" height="5"><path d="M5 0v5H0z" fill="#1a1a1a"/></svg>
<div class="lbl" style="left:801px">Вспо...</div>
<div class="lbl" style="left:851px">Разме...</div>
<div class="lbl" style="left:903px">Обозначен...</div>
<svg class="a" style="left:982px;top:52px" width="17" height="17"><path d="M1 14l3-5h10l-3 5z" fill="none" stroke="#2f7fc1" stroke-width="1.1"/><path d="M1 1l5 6M6 7l-3 1M6 7l0-3" stroke="#2f7fc1" stroke-width="1.1" fill="none"/><path d="M10 3a2.5 2.5 0 1 1 3 2.5V8" fill="none" stroke="#f0a030" stroke-width="1.3"/><circle cx="13" cy="10" r="0.8" fill="#f0a030"/></svg>
<div class="a" style="left:1003px;top:50px;font-size:11px;line-height:10.5px;color:#222">Информация<br>об объекте</div>
<svg class="a" style="left:982px;top:77px" width="17" height="17"><path d="M1 14l3-5h10l-3 5z" fill="none" stroke="#2f7fc1" stroke-width="1.1"/><path d="M0 8l8-4M5 5l1 6" stroke="#2f7fc1" stroke-width="1.1" fill="none"/><path d="M10 2a2.5 2.5 0 1 1 3 2.5V7" fill="none" stroke="#f0a030" stroke-width="1.3"/></svg>
<svg class="a" style="left:995px;top:90px" width="5" height="5"><path d="M5 0v5H0z" fill="#1a1a1a"/></svg>
<div class="a" style="left:1003px;top:75px;font-size:11px;line-height:10.5px;color:#222">Расстояние и<br>угол</div>
<svg class="a" style="left:982px;top:102px" width="17" height="17"><path d="M0 3l3-2h6v5h4l3-2v9l-3 3H0z" fill="#8fc8ee"/><path d="M0 3l3-2h6l-3 2zM6 3l3-2v5l-3 2z M9 6h4l3-2h-4z M13 6l3-2v9l-3 3z" fill="#2f7fc1"/></svg>
<div class="a" style="left:1003px;top:105px;font-size:11px;line-height:10.5px;color:#222">МЦХ модели</div>
<div class="lbl" style="left:995px">Диагностика</div>
<svg class="a" style="left:1072px;top:129px" width="9" height="6"><path d="M0 0h9L4.5 5z" fill="#222"/></svg>
<svg class="a" style="left:1102px;top:52px" width="17" height="17"><rect x="1" y="6" width="14" height="9" fill="none" stroke="#f0a030" stroke-width="1.3"/><rect x="3" y="8" width="5" height="4" fill="none" stroke="#f0a030" stroke-width="1.1"/><path d="M9 12h6" stroke="#f0a030" stroke-width="1.1"/><rect x="8" y="1" width="8" height="7" fill="#8fc8ee" stroke="#2f7fc1" stroke-width="1"/><path d="M4 4l3-3v2h2" fill="none" stroke="#2f7fc1" stroke-width="1"/></svg>
<div class="a" style="left:1123px;top:50px;font-size:11px;line-height:10.5px;color:#222">Создать чертеж<br>по модели</div>
<svg class="a" style="left:1102px;top:77px" width="17" height="17"><rect x="0" y="7" width="8" height="9" fill="#f0a030"/><path d="M0 10h8M0 13h8M4 7v9" stroke="#fff" stroke-width="0.8"/><circle cx="11" cy="6" r="4.5" fill="#2f7fc1"/><circle cx="11" cy="6" r="2" fill="#8fc8ee"/><path d="M3 4a3 3 0 0 1 4-3" fill="none" stroke="#2f7fc1" stroke-width="1"/></svg>
<div class="a" style="left:1123px;top:75px;font-size:11px;line-height:10.5px;color:#222">Создать<br>спецификаци...</div>
<div class="lbl" style="left:1101px">Чертеж, спецификац...</div>
<svg class="a" style="left:1222px;top:52px" width="17" height="17"><circle cx="5" cy="9" r="3.6" fill="none" stroke="#222" stroke-width="1.3"/><path d="M7 6l5-5 2.5 2.5-5 5z" fill="#333"/><path d="M12 9v7M8.5 12.5h7" stroke="#111" stroke-width="2"/></svg>
<div class="a" style="left:1243px;top:50px;font-size:11px;line-height:10.5px;color:#222">Вставить<br>элемент</div>
<svg class="a" style="left:1222px;top:77px" width="17" height="17"><circle cx="6" cy="9" r="4.5" fill="none" stroke="#222" stroke-width="1.2"/><text x="3.5" y="11.5" font-size="6" font-family="Liberation Sans" fill="#222">A</text><text x="10.5" y="12" font-size="7" font-family="Liberation Sans" fill="#222">B</text><path d="M9 12.5l3 3" stroke="#222" stroke-width="1.6"/><path d="M6 3a4 4 0 0 1 7 0" fill="none" stroke="#222" stroke-width="1"/></svg>
<div class="a" style="left:1243px;top:75px;font-size:11px;line-height:10.5px;color:#222">Найти и<br>заменить</div>
<svg class="a" style="left:1222px;top:102px" width="17" height="17"><circle cx="5" cy="7" r="3.6" fill="none" stroke="#222" stroke-width="1.3"/><path d="M7 4l5-4 2.5 2.5-5 5z" fill="#333"/><path d="M5 13a4 3 0 0 0 8 0M13 13l-1.5-2M5 12l1.5 2" fill="none" stroke="#111" stroke-width="1.3"/></svg>
<div class="a" style="left:1243px;top:100px;font-size:11px;line-height:10.5px;color:#222">Обновить<br>ссылки на мо...</div>
<div class="lbl" style="left:1223px">Стандартные изделия</div>
<svg class="a" style="left:188px;top:127px" width="6" height="11"><rect x="0.5" y="0.5" width="1.6" height="1.6" fill="#555"/><rect x="0.5" y="3.1" width="1.6" height="1.6" fill="#555"/><rect x="0.5" y="5.7" width="1.6" height="1.6" fill="#555"/><rect x="0.5" y="8.3" width="1.6" height="1.6" fill="#555"/><rect x="3.5" y="0.5" width="1.6" height="1.6" fill="#555"/><rect x="3.5" y="3.1" width="1.6" height="1.6" fill="#555"/><rect x="3.5" y="5.7" width="1.6" height="1.6" fill="#555"/><rect x="3.5" y="8.3" width="1.6" height="1.6" fill="#555"/></svg>
<svg class="a" style="left:308px;top:127px" width="6" height="11"><rect x="0.5" y="0.5" width="1.6" height="1.6" fill="#555"/><rect x="0.5" y="3.1" width="1.6" height="1.6" fill="#555"/><rect x="0.5" y="5.7" width="1.6" height="1.6" fill="#555"/><rect x="0.5" y="8.3" width="1.6" height="1.6" fill="#555"/><rect x="3.5" y="0.5" width="1.6" height="1.6" fill="#555"/><rect x="3.5" y="3.1" width="1.6" height="1.6" fill="#555"/><rect x="3.5" y="5.7" width="1.6" height="1.6" fill="#555"/><rect x="3.5" y="8.3" width="1.6" height="1.6" fill="#555"/></svg>
<svg class="a" style="left:548px;top:127px" width="6" height="11"><rect x="0.5" y="0.5" width="1.6" height="1.6" fill="#555"/><rect x="0.5" y="3.1" width="1.6" height="1.6" fill="#555"/><rect x="0.5" y="5.7" width="1.6" height="1.6" fill="#555"/><rect x="0.5" y="8.3" width="1.6" height="1.6" fill="#555"/><rect x="3.5" y="0.5" width="1.6" height="1.6" fill="#555"/><rect x="3.5" y="3.1" width="1.6" height="1.6" fill="#555"/><rect x="3.5" y="5.7" width="1.6" height="1.6" fill="#555"/><rect x="3.5" y="8.3" width="1.6" height="1.6" fill="#555"/></svg>
<svg class="a" style="left:668px;top:127px" width="6" height="11"><rect x="0.5" y="0.5" width="1.6" height="1.6" fill="#555"/><rect x="0.5" y="3.1" width="1.6" height="1.6" fill="#555"/><rect x="0.5" y="5.7" width="1.6" height="1.6" fill="#555"/><rect x="0.5" y="8.3" width="1.6" height="1.6" fill="#555"/><rect x="3.5" y="0.5" width="1.6" height="1.6" fill="#555"/><rect x="3.5" y="3.1" width="1.6" height="1.6" fill="#555"/><rect x="3.5" y="5.7" width="1.6" height="1.6" fill="#555"/><rect x="3.5" y="8.3" width="1.6" height="1.6" fill="#555"/></svg>
<svg class="a" style="left:788px;top:127px" width="6" height="11"><rect x="0.5" y="0.5" width="1.6" height="1.6" fill="#555"/><rect x="0.5" y="3.1" width="1.6" height="1.6" fill="#555"/><rect x="0.5" y="5.7" width="1.6" height="1.6" fill="#555"/><rect x="0.5" y="8.3" width="1.6" height="1.6" fill="#555"/><rect x="3.5" y="0.5" width="1.6" height="1.6" fill="#555"/><rect x="3.5" y="3.1" width="1.6" height="1.6" fill="#555"/><rect x="3.5" y="5.7" width="1.6" height="1.6" fill="#555"/><rect x="3.5" y="8.3" width="1.6" height="1.6" fill="#555"/></svg>
<svg class="a" style="left:840px;top:127px" width="6" height="11"><rect x="0.5" y="0.5" width="1.6" height="1.6" fill="#555"/><rect x="0.5" y="3.1" width="1.6" height="1.6" fill="#555"/><rect x="0.5" y="5.7" width="1.6" height="1.6" fill="#555"/><rect x="0.5" y="8.3" width="1.6" height="1.6" fill="#555"/><rect x="3.5" y="0.5" width="1.6" height="1.6" fill="#555"/><rect x="3.5" y="3.1" width="1.6" height="1.6" fill="#555"/><rect x="3.5" y="5.7" width="1.6" height="1.6" fill="#555"/><rect x="3.5" y="8.3" width="1.6" height="1.6" fill="#555"/></svg>
<svg class="a" style="left:892px;top:127px" width="6" height="11"><rect x="0.5" y="0.5" width="1.6" height="1.6" fill="#555"/><rect x="0.5" y="3.1" width="1.6" height="1.6" fill="#555"/><rect x="0.5" y="5.7" width="1.6" height="1.6" fill="#555"/><rect x="0.5" y="8.3" width="1.6" height="1.6" fill="#555"/><rect x="3.5" y="0.5" width="1.6" height="1.6" fill="#555"/><rect x="3.5" y="3.1" width="1.6" height="1.6" fill="#555"/><rect x="3.5" y="5.7" width="1.6" height="1.6" fill="#555"/><rect x="3.5" y="8.3" width="1.6" height="1.6" fill="#555"/></svg>
<svg class="a" style="left:970px;top:127px" width="6" height="11"><rect x="0.5" y="0.5" width="1.6" height="1.6" fill="#555"/><rect x="0.5" y="3.1" width="1.6" height="1.6" fill="#555"/><rect x="0.5" y="5.7" width="1.6" height="1.6" fill="#555"/><rect x="0.5" y="8.3" width="1.6" height="1.6" fill="#555"/><rect x="3.5" y="0.5" width="1.6" height="1.6" fill="#555"/><rect x="3.5" y="3.1" width="1.6" height="1.6" fill="#555"/><rect x="3.5" y="5.7" width="1.6" height="1.6" fill="#555"/><rect x="3.5" y="8.3" width="1.6" height="1.6" fill="#555"/></svg>
<svg class="a" style="left:1090px;top:127px" width="6" height="11"><rect x="0.5" y="0.5" width="1.6" height="1.6" fill="#555"/><rect x="0.5" y="3.1" width="1.6" height="1.6" fill="#555"/><rect x="0.5" y="5.7" width="1.6" height="1.6" fill="#555"/><rect x="0.5" y="8.3" width="1.6" height="1.6" fill="#555"/><rect x="3.5" y="0.5" width="1.6" height="1.6" fill="#555"/><rect x="3.5" y="3.1" width="1.6" height="1.6" fill="#555"/><rect x="3.5" y="5.7" width="1.6" height="1.6" fill="#555"/><rect x="3.5" y="8.3" width="1.6" height="1.6" fill="#555"/></svg>
<svg class="a" style="left:1210px;top:127px" width="6" height="11"><rect x="0.5" y="0.5" width="1.6" height="1.6" fill="#555"/><rect x="0.5" y="3.1" width="1.6" height="1.6" fill="#555"/><rect x="0.5" y="5.7" width="1.6" height="1.6" fill="#555"/><rect x="0.5" y="8.3" width="1.6" height="1.6" fill="#555"/><rect x="3.5" y="0.5" width="1.6" height="1.6" fill="#555"/><rect x="3.5" y="3.1" width="1.6" height="1.6" fill="#555"/><rect x="3.5" y="5.7" width="1.6" height="1.6" fill="#555"/><rect x="3.5" y="8.3" width="1.6" height="1.6" fill="#555"/></svg>
<svg class="a" style="left:1330px;top:127px" width="6" height="11"><rect x="0.5" y="0.5" width="1.6" height="1.6" fill="#555"/><rect x="0.5" y="3.1" width="1.6" height="1.6" fill="#555"/><rect x="0.5" y="5.7" width="1.6" height="1.6" fill="#555"/><rect x="0.5" y="8.3" width="1.6" height="1.6" fill="#555"/><rect x="3.5" y="0.5" width="1.6" height="1.6" fill="#555"/><rect x="3.5" y="3.1" width="1.6" height="1.6" fill="#555"/><rect x="3.5" y="5.7" width="1.6" height="1.6" fill="#555"/><rect x="3.5" y="8.3" width="1.6" height="1.6" fill="#555"/></svg>
</body></html>
